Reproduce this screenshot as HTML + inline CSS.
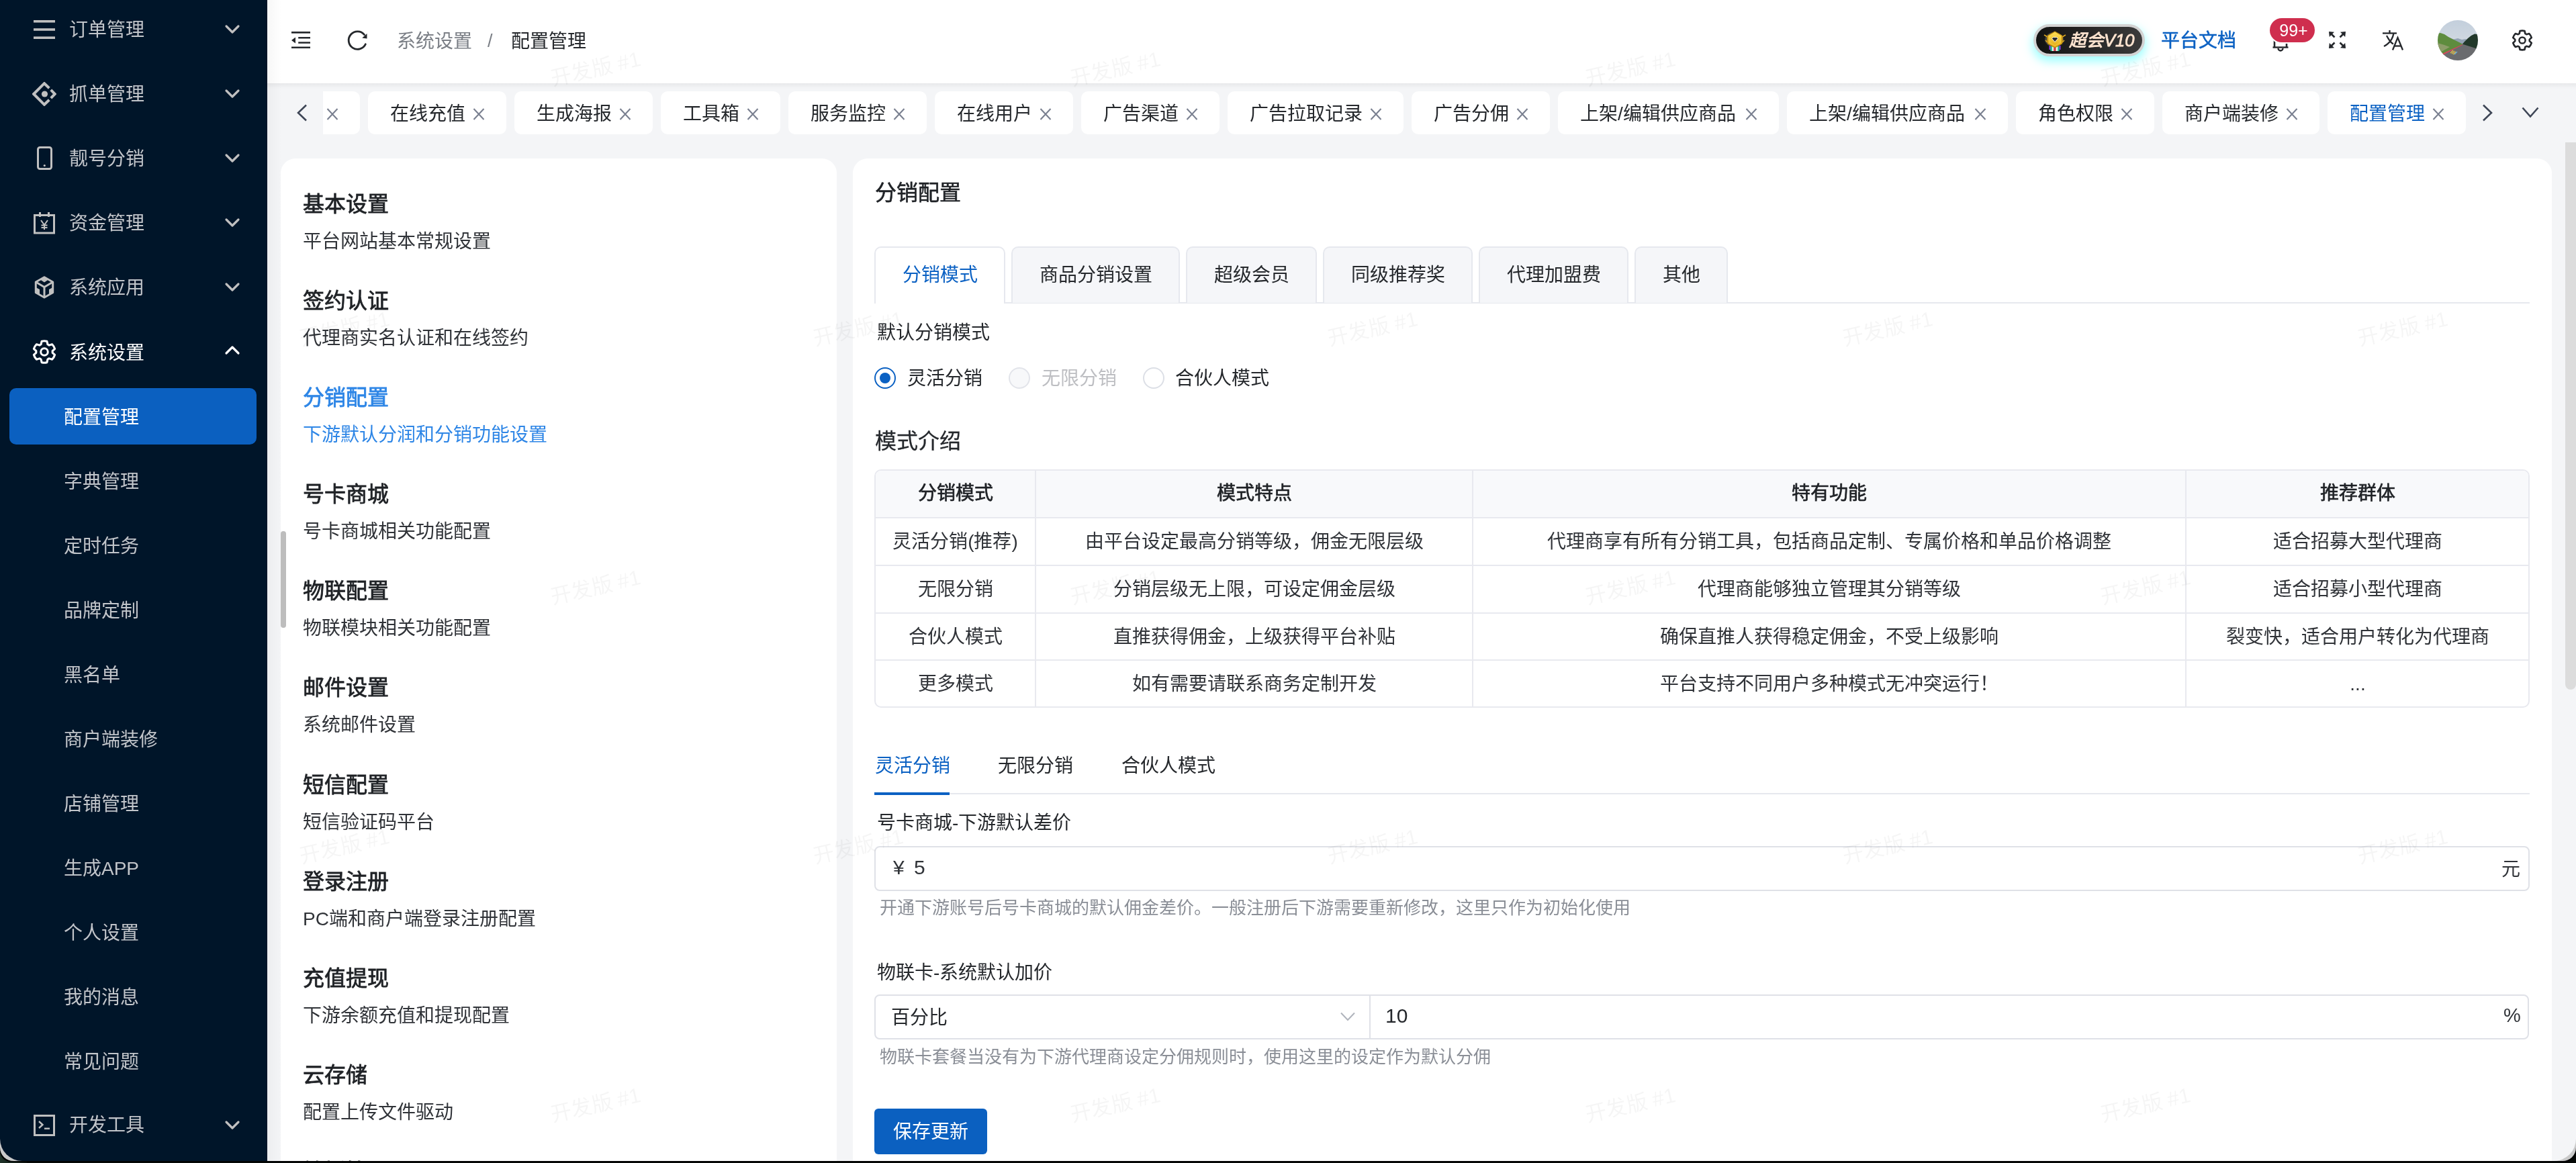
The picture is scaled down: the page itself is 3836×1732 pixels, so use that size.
<!DOCTYPE html>
<html lang="zh-CN"><head><meta charset="utf-8">
<style>
*{box-sizing:border-box;margin:0;padding:0}
html,body{width:3836px;height:1732px;overflow:hidden;background:#050806}
body{font-family:"Liberation Sans",sans-serif;position:relative;color:#25282c}
.frame{position:absolute;left:0;top:0;width:3836px;height:1729px;border-radius:0 0 20px 20px;background:#c9c9c9}
.frameb{position:absolute;left:0;top:0;width:3836px;height:1730px;border-radius:0 0 16px 16px;background:#000}
.win{will-change:transform;position:absolute;left:0;top:0;width:3836px;height:1729px;overflow:hidden;border-radius:0 0 33px 33px;background:#f4f5f7}
.abs{position:absolute;white-space:nowrap}
.t28{font-size:28px;line-height:28px}
.t32{font-size:32px;line-height:32px}
.t26{font-size:26px;line-height:26px}
/* sidebar */
.side{position:absolute;left:0;top:0;width:398px;height:1729px;background:#001529}
.mi{position:absolute;left:0;width:398px;height:96px}
.mi .tx{position:absolute;left:103px;top:31px;font-size:28px;line-height:28px;color:#c2c5ca;white-space:nowrap}
.mi .ic{position:absolute;left:48px;top:26px;width:36px;height:36px}
.mi .chev{position:absolute;left:334px;top:36px;width:24px;height:16px}
.sub .tx{left:95px}
/* header */
.hdr{position:absolute;left:398px;top:0;width:3438px;height:124px;background:#fff;box-shadow:0 2px 6px rgba(0,0,0,.06)}
/* tabs */
.tag{position:absolute;top:136px;height:64px;background:#fff;border-radius:10px}
.tag .tx{position:absolute;left:33px;top:20px;font-size:28px;line-height:28px;color:#25282c;white-space:nowrap}
.tag .x{position:absolute;top:26px;width:18px;height:18px}
/* cards */
.card{position:absolute;background:#fff;border-radius:22px}
.ttl{font-size:32px;line-height:32px;color:#1f2226;-webkit-text-stroke:0.8px currentColor}
.desc{font-size:28px;line-height:28px;color:#303338}
.wm{position:absolute;font-size:31px;line-height:31px;color:rgba(0,0,0,.04);transform:rotate(-13deg);white-space:nowrap;pointer-events:none}
</style></head><body>
<div class="abs" style="left:0;top:1690px;width:40px;height:42px;background:linear-gradient(90deg,#1f3329,#0a0f0c)"></div>
<div class="frameb"></div>
<div class="frame"></div>
<div class="win">

<!-- SIDEBAR -->
<div class="side">
<div class="abs t28" style="left:103px;top:31px;color:#c2c5ca">订单管理</div>
<svg class="abs" style="left:50px;top:30px" width="32" height="28" viewBox="0 0 32 28"><rect x="0" y="0" width="32" height="3.6" fill="#c0c0c0"/><rect x="0" y="12.2" width="32" height="3.6" fill="#c0c0c0"/><rect x="0" y="24.4" width="32" height="3.6" fill="#c0c0c0"/></svg>
<svg class="abs" style="left:334px;top:36px" width="24" height="16" viewBox="0 0 24 16"><path d="M3,3 L12,12 L21,3" fill="none" stroke="#c0c0c0" stroke-width="3.2" stroke-linecap="round" stroke-linejoin="round"/></svg>
<div class="abs t28" style="left:103px;top:127px;color:#c2c5ca">抓单管理</div>
<svg class="abs" style="left:48px;top:122px" width="36" height="36" viewBox="0 0 36 36"><path d="M25.3,9.3 L18,2.2 L2.2,18 L18,33.8 L25.3,26.7" fill="none" stroke="#c0c0c0" stroke-width="4" stroke-linejoin="miter"/><path d="M27.8,11.8 L33.8,18 L27.8,24.2" fill="none" stroke="#c0c0c0" stroke-width="4" stroke-linejoin="miter"/><circle cx="18.5" cy="18" r="4.6" fill="#c0c0c0"/></svg>
<svg class="abs" style="left:334px;top:132px" width="24" height="16" viewBox="0 0 24 16"><path d="M3,3 L12,12 L21,3" fill="none" stroke="#c0c0c0" stroke-width="3.2" stroke-linecap="round" stroke-linejoin="round"/></svg>
<div class="abs t28" style="left:103px;top:223px;color:#c2c5ca">靓号分销</div>
<svg class="abs" style="left:54px;top:217px" width="25" height="38" viewBox="0 0 25 38"><rect x="2.5" y="2.5" width="20" height="32" rx="3" fill="none" stroke="#c0c0c0" stroke-width="3"/><circle cx="12.3" cy="29.5" r="1.6" fill="#c0c0c0"/></svg>
<svg class="abs" style="left:334px;top:228px" width="24" height="16" viewBox="0 0 24 16"><path d="M3,3 L12,12 L21,3" fill="none" stroke="#c0c0c0" stroke-width="3.2" stroke-linecap="round" stroke-linejoin="round"/></svg>
<div class="abs t28" style="left:103px;top:319px;color:#c2c5ca">资金管理</div>
<svg class="abs" style="left:50px;top:315px" width="32" height="34" viewBox="0 0 32 34"><rect x="1.5" y="5.5" width="29" height="26.5" fill="none" stroke="#c0c0c0" stroke-width="3"/><rect x="8" y="1" width="3" height="7" fill="#c0c0c0"/><rect x="21" y="1" width="3" height="7" fill="#c0c0c0"/><path d="M11,13 L16,20 L21,13 M16,20 L16,27 M11.5,20.5 L20.5,20.5 M11.5,24 L20.5,24" fill="none" stroke="#c0c0c0" stroke-width="2"/></svg>
<svg class="abs" style="left:334px;top:324px" width="24" height="16" viewBox="0 0 24 16"><path d="M3,3 L12,12 L21,3" fill="none" stroke="#c0c0c0" stroke-width="3.2" stroke-linecap="round" stroke-linejoin="round"/></svg>
<div class="abs t28" style="left:103px;top:415px;color:#c2c5ca">系统应用</div>
<svg class="abs" style="left:51px;top:411px" width="30" height="34" viewBox="0 0 30 34"><path d="M15,1.8 L27.7,9 L27.7,24.8 L15,32 L2.3,24.8 L2.3,9 Z" fill="none" stroke="#c0c0c0" stroke-width="3" stroke-linejoin="round"/><path d="M2.3,9 L15,16.5 L27.7,9 M15,16.5 L15,32" fill="none" stroke="#c0c0c0" stroke-width="3"/><path d="M9,5.6 L15,9.5 L21,5.6 L15,2 Z" fill="#c0c0c0"/><path d="M2.3,17 L8,20 L8,28.5 L2.3,25 Z" fill="#c0c0c0"/><path d="M27.7,17 L22,20 L22,28.5 L27.7,25 Z" fill="#c0c0c0"/></svg>
<svg class="abs" style="left:334px;top:420px" width="24" height="16" viewBox="0 0 24 16"><path d="M3,3 L12,12 L21,3" fill="none" stroke="#c0c0c0" stroke-width="3.2" stroke-linecap="round" stroke-linejoin="round"/></svg>
<div class="abs t28" style="left:103px;top:512px;color:#ffffff">系统设置</div>
<svg class="abs" style="left:46px;top:504px" width="40" height="40" viewBox="0 0 40 40"><path d="M15.04,8.85 L16.08,4.28 A16.2,16.2 0 0 1 23.92,4.28 L24.96,8.85 A12.2,12.2 0 0 1 27.17,10.13 L31.65,8.75 A16.2,16.2 0 0 1 35.57,15.53 L32.13,18.72 A12.2,12.2 0 0 1 32.13,21.28 L35.57,24.47 A16.2,16.2 0 0 1 31.65,31.25 L27.17,29.87 A12.2,12.2 0 0 1 24.96,31.15 L23.92,35.72 A16.2,16.2 0 0 1 16.08,35.72 L15.04,31.15 A12.2,12.2 0 0 1 12.83,29.87 L8.35,31.25 A16.2,16.2 0 0 1 4.43,24.47 L7.87,21.28 A12.2,12.2 0 0 1 7.87,18.72 L4.43,15.53 A16.2,16.2 0 0 1 8.35,8.75 L12.83,10.13 A12.2,12.2 0 0 1 15.04,8.85 Z" fill="none" stroke="#fff" stroke-width="3.1" stroke-linejoin="round"/><circle cx="20" cy="20" r="5.3" fill="none" stroke="#fff" stroke-width="3"/></svg>
<svg class="abs" style="left:334px;top:513px" width="24" height="16" viewBox="0 0 24 16"><path d="M3,13 L12,4 L21,13" fill="none" stroke="#fff" stroke-width="3.2" stroke-linecap="round" stroke-linejoin="round"/></svg>
<div class="abs" style="left:14px;top:578px;width:368px;height:84px;background:#0b60c0;border-radius:10px"></div>
<div class="abs t28" style="left:95px;top:608px;color:#ffffff">配置管理</div>
<div class="abs t28" style="left:95px;top:704px;color:#c2c5ca">字典管理</div>
<div class="abs t28" style="left:95px;top:800px;color:#c2c5ca">定时任务</div>
<div class="abs t28" style="left:95px;top:896px;color:#c2c5ca">品牌定制</div>
<div class="abs t28" style="left:95px;top:992px;color:#c2c5ca">黑名单</div>
<div class="abs t28" style="left:95px;top:1088px;color:#c2c5ca">商户端装修</div>
<div class="abs t28" style="left:95px;top:1184px;color:#c2c5ca">店铺管理</div>
<div class="abs t28" style="left:95px;top:1280px;color:#c2c5ca">生成APP</div>
<div class="abs t28" style="left:95px;top:1376px;color:#c2c5ca">个人设置</div>
<div class="abs t28" style="left:95px;top:1472px;color:#c2c5ca">我的消息</div>
<div class="abs t28" style="left:95px;top:1568px;color:#c2c5ca">常见问题</div>
<div class="abs t28" style="left:103px;top:1662px;color:#c2c5ca">开发工具</div>
<svg class="abs" style="left:50px;top:1660px" width="32" height="32" viewBox="0 0 32 32"><rect x="1.5" y="1.5" width="29" height="29" fill="none" stroke="#c0c0c0" stroke-width="3"/><path d="M8,10 L13.5,15 L8,20" fill="none" stroke="#c0c0c0" stroke-width="2.4"/><rect x="16" y="19.5" width="8" height="2.4" fill="#c0c0c0"/></svg>
<svg class="abs" style="left:334px;top:1668px" width="24" height="16" viewBox="0 0 24 16"><path d="M3,3 L12,12 L21,3" fill="none" stroke="#c0c0c0" stroke-width="3.2" stroke-linecap="round" stroke-linejoin="round"/></svg>
</div>

<!-- HEADER -->
<div class="hdr"></div>
<svg class="abs" style="left:434px;top:47px" width="28" height="25" viewBox="0 0 28 25"><rect x="0" y="0" width="28" height="2.7" fill="#25282c"/><rect x="10.2" y="8" width="17.8" height="2.5" fill="#25282c"/><rect x="10.2" y="15.3" width="17.8" height="2.5" fill="#25282c"/><rect x="0" y="22.5" width="28" height="2.6" fill="#25282c"/><path d="M6,8.6 L6,17.6 L0,13.1 Z" fill="#25282c"/></svg>
<svg class="abs" style="left:516px;top:44px" width="33" height="33" viewBox="0 0 33 33"><path d="M28.3,21.8 A13.2,13.2 0 1 1 26.5,7.6" fill="none" stroke="#25282c" stroke-width="2.8" stroke-linecap="round"/><path d="M30.5,6 L30.5,13.5 L23.3,12.5 Z" fill="#25282c"/></svg>
<div class="abs t28" style="left:591px;top:48px;color:#7b7f86">系统设置</div>
<div class="abs t28" style="left:726px;top:47px;color:#7b7f86;font-size:27px">/</div>
<div class="abs t28" style="left:761px;top:48px;color:#25282c">配置管理</div>
<div class="abs" style="left:3028px;top:36px;width:166px;height:48px;border-radius:24px;background:#d3d3d3;box-shadow:0 6px 14px 2px rgba(90,255,255,.55)"></div>
<div class="abs" style="left:3032px;top:40px;width:158px;height:40px;border-radius:20px;background:linear-gradient(90deg,#121212,#3b3b3b)"></div>
<svg class="abs" style="left:3043px;top:45px" width="34" height="32" viewBox="0 0 34 32"><defs><linearGradient id="gd" x1="0" y1="0" x2="0" y2="1"><stop offset="0" stop-color="#ffe25a"/><stop offset="1" stop-color="#e0a812"/></linearGradient></defs><ellipse cx="16" cy="14" rx="14" ry="11" fill="#4a4a46" opacity=".8"/><path d="M1,7 L6,10 L6,18 L3,15 M33,7 L28,10 L28,18 L31,15" fill="none" stroke="#d9a520" stroke-width="1.6"/><rect x="8.5" y="23" width="2" height="6" fill="#8a3cf0"/><rect x="23.5" y="23" width="2" height="6" fill="#8a3cf0"/><rect x="10.5" y="24" width="2.5" height="7" fill="#2bc49a"/><rect x="13" y="24" width="2.5" height="7" fill="#f4f4f4"/><rect x="15.5" y="25" width="3" height="6" fill="#e23b4a"/><rect x="18.5" y="24" width="2.5" height="7" fill="#f4f4f4"/><rect x="21" y="24" width="2.5" height="7" fill="#2bc49a"/><path d="M17,2 L27.5,8 L27.5,20 L17,26 L6.5,20 L6.5,8 Z" fill="url(#gd)" stroke="#b9860c" stroke-width="1.2"/><path d="M17,5 L25,9.5 L25,18.5 L17,23 L9,18.5 L9,9.5 Z" fill="none" stroke="#f7d04a" stroke-width="0.8"/><path d="M12.5,12.5 L14.5,10.5 L19.5,10.5 L21.5,12.5 L17,17.5 Z" fill="#2e2e2e" stroke="#fff" stroke-width="0.9"/></svg>
<div class="abs" style="left:3081px;top:47px;font-size:25.5px;line-height:26px;font-style:italic;color:#fde4d0;-webkit-text-stroke:0.8px #fde4d0">超会V10</div>
<div class="abs t28" style="left:3218px;top:47px;color:#0b61c3;-webkit-text-stroke:0.5px #0b61c3">平台文档</div>
<svg class="abs" style="left:3382px;top:40px" width="28" height="38" viewBox="0 0 28 38"><path d="M5,31 L5,16 A9,9 0 0 1 23,16 L23,31" fill="none" stroke="#25282c" stroke-width="2.6"/><path d="M2.5,30.5 L25.5,30.5" stroke="#25282c" stroke-width="2.4"/><path d="M10.5,32 A3.5,3.5 0 0 0 17.5,32" fill="none" stroke="#25282c" stroke-width="2.4"/></svg>
<div class="abs" style="left:3378px;top:25px;width:71px;height:40px;border-radius:20px;background:#fff"></div>
<div class="abs" style="left:3380px;top:27px;width:67px;height:36px;border-radius:18px;background:#cf2e4e"></div>
<div class="abs" style="left:3382px;top:33px;width:67px;text-align:center;font-size:25px;line-height:25px;color:#fff">99+</div>
<svg class="abs" style="left:3467px;top:46px" width="27" height="27" viewBox="0 0 27 27"><g fill="none" stroke="#25282c" stroke-width="2.6"><path d="M9.5,9.5 L2.5,2.5"/><path d="M17.5,9.5 L24.5,2.5"/><path d="M9.5,17.5 L2.5,24.5"/><path d="M17.5,17.5 L24.5,24.5"/></g><g fill="#25282c"><path d="M1,1 L9,1.8 L1.8,9 Z"/><path d="M26,1 L18,1.8 L25.2,9 Z"/><path d="M1,26 L9,25.2 L1.8,18 Z"/><path d="M26,26 L18,25.2 L25.2,18 Z"/></g></svg>
<svg class="abs" style="left:3547px;top:45px" width="34" height="31" viewBox="0 0 34 31"><g fill="none" stroke="#25282c" stroke-width="2.3"><path d="M1,4.5 L22,4.5"/><path d="M11.5,0 L11.5,4.5"/><path d="M17.5,4.5 C16,13 11,20 3,24"/><path d="M7,8 C10,14 14,19 17,20.5"/><path d="M16,29.5 L23.5,11 L31,29.5"/><path d="M18.5,23.5 L28.5,23.5"/></g></svg>
<svg class="abs" style="left:3630px;top:30px" width="60" height="60" viewBox="0 0 60 60"><defs><clipPath id="avc"><circle cx="30" cy="30" r="30"/></clipPath><linearGradient id="sky" x1="0" y1="0" x2="0" y2="1"><stop offset="0" stop-color="#c3cfdc"/><stop offset="1" stop-color="#dde1e6"/></linearGradient></defs><g clip-path="url(#avc)"><rect width="60" height="60" fill="url(#sky)"/><path d="M22,29 L30,27 L36,29 L42,28 L46,31 L40,35 L30,35 Z" fill="#94a3b4"/><path d="M0,20 L4,19 L10,21 L16,25 L24,29 L32,33 L37,35.5 L37,37 L0,55 Z" fill="#5e8c3e"/><path d="M0,34 L10,37 L18,40 L0,50 Z" fill="#8d9d6a"/><path d="M60,21 L55,20.5 L50,23 L45,27 L40,32 L37,35.5 L37,37 L60,44 Z" fill="#22382a"/><path d="M37,36 L38,36 L60,43 L60,60 L0,60 L0,54 Z" fill="#6a6b6e"/><path d="M0,53 L37,36 L37,37 L2,55 Z" fill="#d24a5c"/><path d="M19,49 L23,45 M21,50 L25,46 M23,51 L27,47" stroke="#e6c24a" stroke-width="1.2"/><path d="M25,51 L29,47" stroke="#6ab0e0" stroke-width="1.2"/></g></svg>
<svg class="abs" style="left:3736px;top:40px" width="40" height="40" viewBox="0 0 40 40"><path d="M15.61,10.13 L16.54,6.12 A14.3,14.3 0 0 1 23.46,6.12 L24.39,10.13 A10.8,10.8 0 0 1 26.35,11.26 L30.29,10.07 A14.3,14.3 0 0 1 33.75,16.06 L30.74,18.87 A10.8,10.8 0 0 1 30.74,21.13 L33.75,23.94 A14.3,14.3 0 0 1 30.29,29.93 L26.35,28.74 A10.8,10.8 0 0 1 24.39,29.87 L23.46,33.88 A14.3,14.3 0 0 1 16.54,33.88 L15.61,29.87 A10.8,10.8 0 0 1 13.65,28.74 L9.71,29.93 A14.3,14.3 0 0 1 6.25,23.94 L9.26,21.13 A10.8,10.8 0 0 1 9.26,18.87 L6.25,16.06 A14.3,14.3 0 0 1 9.71,10.07 L13.65,11.26 A10.8,10.8 0 0 1 15.61,10.13 Z" fill="none" stroke="#25282c" stroke-width="2.7" stroke-linejoin="round"/><circle cx="20" cy="20" r="4.6" fill="none" stroke="#25282c" stroke-width="2.5"/></svg>

<!-- TAGS -->
<div class="abs" style="left:398px;top:124px;width:3438px;height:112px;background:#f4f5f7"></div>
<div class="abs" style="left:481px;top:136px;width:55px;height:64px;background:#fff;border-radius:0 10px 10px 0"></div>
<svg class="abs" style="left:486px;top:161px" width="18" height="18" viewBox="0 0 18 18"><path d="M1.5,1 L16.5,17 M16.5,1 L1.5,17" stroke="#7a8090" stroke-width="2.1"/></svg>
<div class="abs" style="left:548px;top:136px;width:206px;height:64px;background:#fff;border-radius:10px"></div>
<div class="abs t28" style="left:581px;top:156px;color:#25282c">在线充值</div>
<svg class="abs" style="left:704px;top:161px" width="18" height="18" viewBox="0 0 18 18"><path d="M1.5,1 L16.5,17 M16.5,1 L1.5,17" stroke="#7a8090" stroke-width="2.1"/></svg>
<div class="abs" style="left:766px;top:136px;width:206px;height:64px;background:#fff;border-radius:10px"></div>
<div class="abs t28" style="left:799px;top:156px;color:#25282c">生成海报</div>
<svg class="abs" style="left:922px;top:161px" width="18" height="18" viewBox="0 0 18 18"><path d="M1.5,1 L16.5,17 M16.5,1 L1.5,17" stroke="#7a8090" stroke-width="2.1"/></svg>
<div class="abs" style="left:984px;top:136px;width:178px;height:64px;background:#fff;border-radius:10px"></div>
<div class="abs t28" style="left:1017px;top:156px;color:#25282c">工具箱</div>
<svg class="abs" style="left:1112px;top:161px" width="18" height="18" viewBox="0 0 18 18"><path d="M1.5,1 L16.5,17 M16.5,1 L1.5,17" stroke="#7a8090" stroke-width="2.1"/></svg>
<div class="abs" style="left:1174px;top:136px;width:206px;height:64px;background:#fff;border-radius:10px"></div>
<div class="abs t28" style="left:1207px;top:156px;color:#25282c">服务监控</div>
<svg class="abs" style="left:1330px;top:161px" width="18" height="18" viewBox="0 0 18 18"><path d="M1.5,1 L16.5,17 M16.5,1 L1.5,17" stroke="#7a8090" stroke-width="2.1"/></svg>
<div class="abs" style="left:1392px;top:136px;width:206px;height:64px;background:#fff;border-radius:10px"></div>
<div class="abs t28" style="left:1425px;top:156px;color:#25282c">在线用户</div>
<svg class="abs" style="left:1548px;top:161px" width="18" height="18" viewBox="0 0 18 18"><path d="M1.5,1 L16.5,17 M16.5,1 L1.5,17" stroke="#7a8090" stroke-width="2.1"/></svg>
<div class="abs" style="left:1610px;top:136px;width:206px;height:64px;background:#fff;border-radius:10px"></div>
<div class="abs t28" style="left:1643px;top:156px;color:#25282c">广告渠道</div>
<svg class="abs" style="left:1766px;top:161px" width="18" height="18" viewBox="0 0 18 18"><path d="M1.5,1 L16.5,17 M16.5,1 L1.5,17" stroke="#7a8090" stroke-width="2.1"/></svg>
<div class="abs" style="left:1828px;top:136px;width:262px;height:64px;background:#fff;border-radius:10px"></div>
<div class="abs t28" style="left:1861px;top:156px;color:#25282c">广告拉取记录</div>
<svg class="abs" style="left:2040px;top:161px" width="18" height="18" viewBox="0 0 18 18"><path d="M1.5,1 L16.5,17 M16.5,1 L1.5,17" stroke="#7a8090" stroke-width="2.1"/></svg>
<div class="abs" style="left:2102px;top:136px;width:206px;height:64px;background:#fff;border-radius:10px"></div>
<div class="abs t28" style="left:2135px;top:156px;color:#25282c">广告分佣</div>
<svg class="abs" style="left:2258px;top:161px" width="18" height="18" viewBox="0 0 18 18"><path d="M1.5,1 L16.5,17 M16.5,1 L1.5,17" stroke="#7a8090" stroke-width="2.1"/></svg>
<div class="abs" style="left:2320px;top:136px;width:329px;height:64px;background:#fff;border-radius:10px"></div>
<div class="abs t28" style="left:2353px;top:156px;color:#25282c">上架/编辑供应商品</div>
<svg class="abs" style="left:2599px;top:161px" width="18" height="18" viewBox="0 0 18 18"><path d="M1.5,1 L16.5,17 M16.5,1 L1.5,17" stroke="#7a8090" stroke-width="2.1"/></svg>
<div class="abs" style="left:2661px;top:136px;width:329px;height:64px;background:#fff;border-radius:10px"></div>
<div class="abs t28" style="left:2694px;top:156px;color:#25282c">上架/编辑供应商品</div>
<svg class="abs" style="left:2940px;top:161px" width="18" height="18" viewBox="0 0 18 18"><path d="M1.5,1 L16.5,17 M16.5,1 L1.5,17" stroke="#7a8090" stroke-width="2.1"/></svg>
<div class="abs" style="left:3002px;top:136px;width:206px;height:64px;background:#fff;border-radius:10px"></div>
<div class="abs t28" style="left:3035px;top:156px;color:#25282c">角色权限</div>
<svg class="abs" style="left:3158px;top:161px" width="18" height="18" viewBox="0 0 18 18"><path d="M1.5,1 L16.5,17 M16.5,1 L1.5,17" stroke="#7a8090" stroke-width="2.1"/></svg>
<div class="abs" style="left:3220px;top:136px;width:234px;height:64px;background:#fff;border-radius:10px"></div>
<div class="abs t28" style="left:3253px;top:156px;color:#25282c">商户端装修</div>
<svg class="abs" style="left:3404px;top:161px" width="18" height="18" viewBox="0 0 18 18"><path d="M1.5,1 L16.5,17 M16.5,1 L1.5,17" stroke="#7a8090" stroke-width="2.1"/></svg>
<div class="abs" style="left:3466px;top:136px;width:206px;height:64px;background:#fff;border-radius:10px"></div>
<div class="abs t28" style="left:3499px;top:156px;color:#0b61c3">配置管理</div>
<svg class="abs" style="left:3622px;top:161px" width="18" height="18" viewBox="0 0 18 18"><path d="M1.5,1 L16.5,17 M16.5,1 L1.5,17" stroke="#7a8090" stroke-width="2.1"/></svg>
<svg class="abs" style="left:440px;top:154px" width="20" height="28" viewBox="0 0 20 28"><path d="M16,2.5 L4,14 L16,25.5" fill="none" stroke="#3e4656" stroke-width="2.6"/></svg>
<svg class="abs" style="left:3694px;top:154px" width="20" height="28" viewBox="0 0 20 28"><path d="M4,2.5 L16,14 L4,25.5" fill="none" stroke="#3e4656" stroke-width="2.6"/></svg>
<svg class="abs" style="left:3754px;top:157px" width="28" height="20" viewBox="0 0 28 20"><path d="M2.5,3.5 L14,16.5 L25.5,3.5" fill="none" stroke="#3e4656" stroke-width="2.6"/></svg>

<!-- LEFT CARD -->
<div class="card" style="left:418px;top:236px;width:828px;height:1600px"></div>
<div class="abs ttl" style="left:451px;top:288px">基本设置</div>
<div class="abs desc" style="left:451px;top:346px">平台网站基本常规设置</div>
<div class="abs ttl" style="left:451px;top:432px">签约认证</div>
<div class="abs desc" style="left:451px;top:490px">代理商实名认证和在线签约</div>
<div class="abs ttl" style="left:451px;top:576px;color:#2e86e6">分销配置</div>
<div class="abs desc" style="left:451px;top:634px;color:#2e86e6">下游默认分润和分销功能设置</div>
<div class="abs ttl" style="left:451px;top:720px">号卡商城</div>
<div class="abs desc" style="left:451px;top:778px">号卡商城相关功能配置</div>
<div class="abs ttl" style="left:451px;top:864px">物联配置</div>
<div class="abs desc" style="left:451px;top:922px">物联模块相关功能配置</div>
<div class="abs ttl" style="left:451px;top:1008px">邮件设置</div>
<div class="abs desc" style="left:451px;top:1066px">系统邮件设置</div>
<div class="abs ttl" style="left:451px;top:1153px">短信配置</div>
<div class="abs desc" style="left:451px;top:1211px">短信验证码平台</div>
<div class="abs ttl" style="left:451px;top:1297px">登录注册</div>
<div class="abs desc" style="left:451px;top:1355px">PC端和商户端登录注册配置</div>
<div class="abs ttl" style="left:451px;top:1441px">充值提现</div>
<div class="abs desc" style="left:451px;top:1499px">下游余额充值和提现配置</div>
<div class="abs ttl" style="left:451px;top:1585px">云存储</div>
<div class="abs desc" style="left:451px;top:1643px">配置上传文件驱动</div>
<div class="abs ttl" style="left:451px;top:1729px">轮播管理</div>
<div class="abs" style="left:418px;top:791px;width:8px;height:144px;border-radius:4px;background:#bdbdbd"></div>

<!-- RIGHT CARD -->
<div class="card" style="left:1270px;top:236px;width:2530px;height:1600px"></div>
<div class="abs" style="left:1303px;top:271px;font-size:32px;line-height:32px;-webkit-text-stroke:0.6px #1f2226;color:#1f2226">分销配置</div>
<div class="abs" style="left:1302px;top:450px;width:2465px;height:2px;background:#e6e8ee"></div>
<div class="abs" style="left:1302px;top:367px;width:195px;height:85px;background:#fff;border:2px solid #e6e8ee;border-bottom:none;border-radius:10px 10px 0 0"></div>
<div class="abs t28" style="left:1302px;width:195px;text-align:center;top:396px;color:#0b61c3">分销模式</div>
<div class="abs" style="left:1506px;top:367px;width:251px;height:84px;background:#f5f6f9;border:2px solid #e6e8ee;border-bottom:none;border-radius:10px 10px 0 0"></div>
<div class="abs t28" style="left:1506px;width:251px;text-align:center;top:396px;color:#25282c">商品分销设置</div>
<div class="abs" style="left:1766px;top:367px;width:195px;height:84px;background:#f5f6f9;border:2px solid #e6e8ee;border-bottom:none;border-radius:10px 10px 0 0"></div>
<div class="abs t28" style="left:1766px;width:195px;text-align:center;top:396px;color:#25282c">超级会员</div>
<div class="abs" style="left:1970px;top:367px;width:223px;height:84px;background:#f5f6f9;border:2px solid #e6e8ee;border-bottom:none;border-radius:10px 10px 0 0"></div>
<div class="abs t28" style="left:1970px;width:223px;text-align:center;top:396px;color:#25282c">同级推荐奖</div>
<div class="abs" style="left:2202px;top:367px;width:223px;height:84px;background:#f5f6f9;border:2px solid #e6e8ee;border-bottom:none;border-radius:10px 10px 0 0"></div>
<div class="abs t28" style="left:2202px;width:223px;text-align:center;top:396px;color:#25282c">代理加盟费</div>
<div class="abs" style="left:2434px;top:367px;width:139px;height:84px;background:#f5f6f9;border:2px solid #e6e8ee;border-bottom:none;border-radius:10px 10px 0 0"></div>
<div class="abs t28" style="left:2434px;width:139px;text-align:center;top:396px;color:#25282c">其他</div>
<div class="abs t28" style="left:1306px;top:482px;color:#25282c">默认分销模式</div>
<div class="abs" style="left:1302px;top:547px;width:32px;height:32px;border-radius:16px;border:2.5px solid #0b61c3;background:#fff"></div>
<div class="abs" style="left:1310px;top:555px;width:16px;height:16px;border-radius:8px;background:#0b61c3"></div>
<div class="abs t28" style="left:1351px;top:550px;color:#25282c">灵活分销</div>
<div class="abs" style="left:1502px;top:547px;width:32px;height:32px;border-radius:16px;border:2px solid #e2e4ea;background:#f7f8fa"></div>
<div class="abs t28" style="left:1551px;top:550px;color:#bdbec2">无限分销</div>
<div class="abs" style="left:1702px;top:547px;width:32px;height:32px;border-radius:16px;border:2px solid #dcdfe6;background:#fff"></div>
<div class="abs t28" style="left:1750px;top:550px;color:#25282c">合伙人模式</div>
<div class="abs" style="left:1303px;top:641px;font-size:32px;line-height:32px;-webkit-text-stroke:0.3px #25282c;color:#25282c">模式介绍</div>
<div class="abs" style="left:1302px;top:699px;width:2465px;height:355px;border:2px solid #e8e9ef;border-radius:10px;overflow:hidden;background:#fff"><div style="position:absolute;left:0;top:0;width:100%;height:71px;background:#f8f9fb"></div></div>
<div class="abs" style="left:1304px;top:770px;width:2461px;height:2px;background:#e8e9ef"></div>
<div class="abs" style="left:1304px;top:841px;width:2461px;height:2px;background:#e8e9ef"></div>
<div class="abs" style="left:1304px;top:912px;width:2461px;height:2px;background:#e8e9ef"></div>
<div class="abs" style="left:1304px;top:982px;width:2461px;height:2px;background:#e8e9ef"></div>
<div class="abs" style="left:1541px;top:701px;width:2px;height:351px;background:#e8e9ef"></div>
<div class="abs" style="left:2192px;top:701px;width:2px;height:351px;background:#e8e9ef"></div>
<div class="abs" style="left:3254px;top:701px;width:2px;height:351px;background:#e8e9ef"></div>
<div class="abs t28" style="left:1303px;width:239px;text-align:center;top:721px;-webkit-text-stroke:0.7px #1f2226;color:#1f2226">分销模式</div>
<div class="abs t28" style="left:1542px;width:651px;text-align:center;top:721px;-webkit-text-stroke:0.7px #1f2226;color:#1f2226">模式特点</div>
<div class="abs t28" style="left:2193px;width:1062px;text-align:center;top:721px;-webkit-text-stroke:0.7px #1f2226;color:#1f2226">特有功能</div>
<div class="abs t28" style="left:3255px;width:512px;text-align:center;top:721px;-webkit-text-stroke:0.7px #1f2226;color:#1f2226">推荐群体</div>
<div class="abs t28" style="left:1303px;width:239px;text-align:center;top:793px;color:#303338">灵活分销(推荐)</div>
<div class="abs t28" style="left:1542px;width:651px;text-align:center;top:793px;color:#303338">由平台设定最高分销等级，佣金无限层级</div>
<div class="abs t28" style="left:2193px;width:1062px;text-align:center;top:793px;color:#303338">代理商享有所有分销工具，包括商品定制、专属价格和单品价格调整</div>
<div class="abs t28" style="left:3255px;width:512px;text-align:center;top:793px;color:#303338">适合招募大型代理商</div>
<div class="abs t28" style="left:1303px;width:239px;text-align:center;top:864px;color:#303338">无限分销</div>
<div class="abs t28" style="left:1542px;width:651px;text-align:center;top:864px;color:#303338">分销层级无上限，可设定佣金层级</div>
<div class="abs t28" style="left:2193px;width:1062px;text-align:center;top:864px;color:#303338">代理商能够独立管理其分销等级</div>
<div class="abs t28" style="left:3255px;width:512px;text-align:center;top:864px;color:#303338">适合招募小型代理商</div>
<div class="abs t28" style="left:1303px;width:239px;text-align:center;top:935px;color:#303338">合伙人模式</div>
<div class="abs t28" style="left:1542px;width:651px;text-align:center;top:935px;color:#303338">直推获得佣金，上级获得平台补贴</div>
<div class="abs t28" style="left:2193px;width:1062px;text-align:center;top:935px;color:#303338">确保直推人获得稳定佣金，不受上级影响</div>
<div class="abs t28" style="left:3255px;width:512px;text-align:center;top:935px;color:#303338">裂变快，适合用户转化为代理商</div>
<div class="abs t28" style="left:1303px;width:239px;text-align:center;top:1005px;color:#303338">更多模式</div>
<div class="abs t28" style="left:1542px;width:651px;text-align:center;top:1005px;color:#303338">如有需要请联系商务定制开发</div>
<div class="abs t28" style="left:2193px;width:1062px;text-align:center;top:1005px;color:#303338">平台支持不同用户多种模式无冲突运行！</div>
<div class="abs t28" style="left:3255px;width:512px;text-align:center;top:1005px;color:#303338">...</div>
<div class="abs t28" style="left:1303px;top:1127px;color:#0b61c3">灵活分销</div>
<div class="abs t28" style="left:1486px;top:1127px;color:#25282c">无限分销</div>
<div class="abs t28" style="left:1670px;top:1127px;color:#25282c">合伙人模式</div>
<div class="abs" style="left:1302px;top:1181px;width:2465px;height:2px;background:#e6e8ee"></div>
<div class="abs" style="left:1302px;top:1180px;width:112px;height:4px;background:#0b61c3"></div>
<div class="abs t28" style="left:1306px;top:1212px;color:#25282c">号卡商城-下游默认差价</div>
<div class="abs" style="left:1302px;top:1260px;width:2465px;height:67px;border:2px solid #dfe1e7;border-radius:8px;background:#fff"></div>
<div class="abs" style="left:1330px;top:1277px;font-size:30px;line-height:30px;color:#303338">¥</div>
<div class="abs" style="left:1361px;top:1277px;font-size:30px;line-height:30px;color:#303338">5</div>
<div class="abs t28" style="left:3725px;top:1281px;color:#303338">元</div>
<div class="abs t26" style="left:1310px;top:1339px;color:#8a8e96">开通下游账号后号卡商城的默认佣金差价。一般注册后下游需要重新修改，这里只作为初始化使用</div>
<div class="abs t28" style="left:1306px;top:1435px;color:#25282c">物联卡-系统默认加价</div>
<div class="abs" style="left:1302px;top:1481px;width:2464px;height:67px;border:2px solid #dfe1e7;border-radius:8px;background:#fff"></div>
<div class="abs" style="left:2039px;top:1483px;width:2px;height:63px;background:#dfe1e7"></div>
<div class="abs t28" style="left:1327px;top:1502px;color:#25282c">百分比</div>
<svg class="abs" style="left:1995px;top:1506px" width="24" height="16" viewBox="0 0 24 16"><path d="M2,2.5 L12,13 L22,2.5" fill="none" stroke="#b0b4bc" stroke-width="2"/></svg>
<div class="abs" style="left:2063px;top:1498px;font-size:30px;line-height:30px;color:#25282c">10</div>
<div class="abs" style="left:3728px;top:1498px;font-size:29px;line-height:29px;color:#303338">%</div>
<div class="abs t26" style="left:1310px;top:1561px;color:#8a8e96">物联卡套餐当没有为下游代理商设定分佣规则时，使用这里的设定作为默认分佣</div>
<div class="abs" style="left:1302px;top:1651px;width:168px;height:68px;border-radius:6px;background:#0b60c0"></div>
<div class="abs t28" style="left:1330px;top:1672px;color:#fff">保存更新</div>

<div class="abs" style="left:398px;top:0;width:22px;height:1729px;background:linear-gradient(90deg,rgba(0,0,0,.03),rgba(0,0,0,0))"></div>
<div class="abs" style="left:398px;top:124px;width:3438px;height:8px;background:linear-gradient(180deg,rgba(0,0,0,.05),rgba(0,0,0,0))"></div>
<div class="abs" style="left:3820px;top:212px;width:16px;height:815px;background:#dcdcdc;border-radius:0 0 8px 8px"></div>
<div class="wm" style="left:819px;top:87px">开发版 #1</div>
<div class="wm" style="left:1593px;top:87px">开发版 #1</div>
<div class="wm" style="left:2360px;top:87px">开发版 #1</div>
<div class="wm" style="left:3127px;top:87px">开发版 #1</div>
<div class="wm" style="left:445px;top:474px">开发版 #1</div>
<div class="wm" style="left:1210px;top:474px">开发版 #1</div>
<div class="wm" style="left:1976px;top:474px">开发版 #1</div>
<div class="wm" style="left:2743px;top:474px">开发版 #1</div>
<div class="wm" style="left:3510px;top:474px">开发版 #1</div>
<div class="wm" style="left:819px;top:859px">开发版 #1</div>
<div class="wm" style="left:1593px;top:859px">开发版 #1</div>
<div class="wm" style="left:2360px;top:859px">开发版 #1</div>
<div class="wm" style="left:3127px;top:859px">开发版 #1</div>
<div class="wm" style="left:445px;top:1245px">开发版 #1</div>
<div class="wm" style="left:1210px;top:1245px">开发版 #1</div>
<div class="wm" style="left:1976px;top:1245px">开发版 #1</div>
<div class="wm" style="left:2743px;top:1245px">开发版 #1</div>
<div class="wm" style="left:3510px;top:1245px">开发版 #1</div>
<div class="wm" style="left:819px;top:1630px">开发版 #1</div>
<div class="wm" style="left:1593px;top:1630px">开发版 #1</div>
<div class="wm" style="left:2360px;top:1630px">开发版 #1</div>
<div class="wm" style="left:3127px;top:1630px">开发版 #1</div>
</div>
</body></html>
